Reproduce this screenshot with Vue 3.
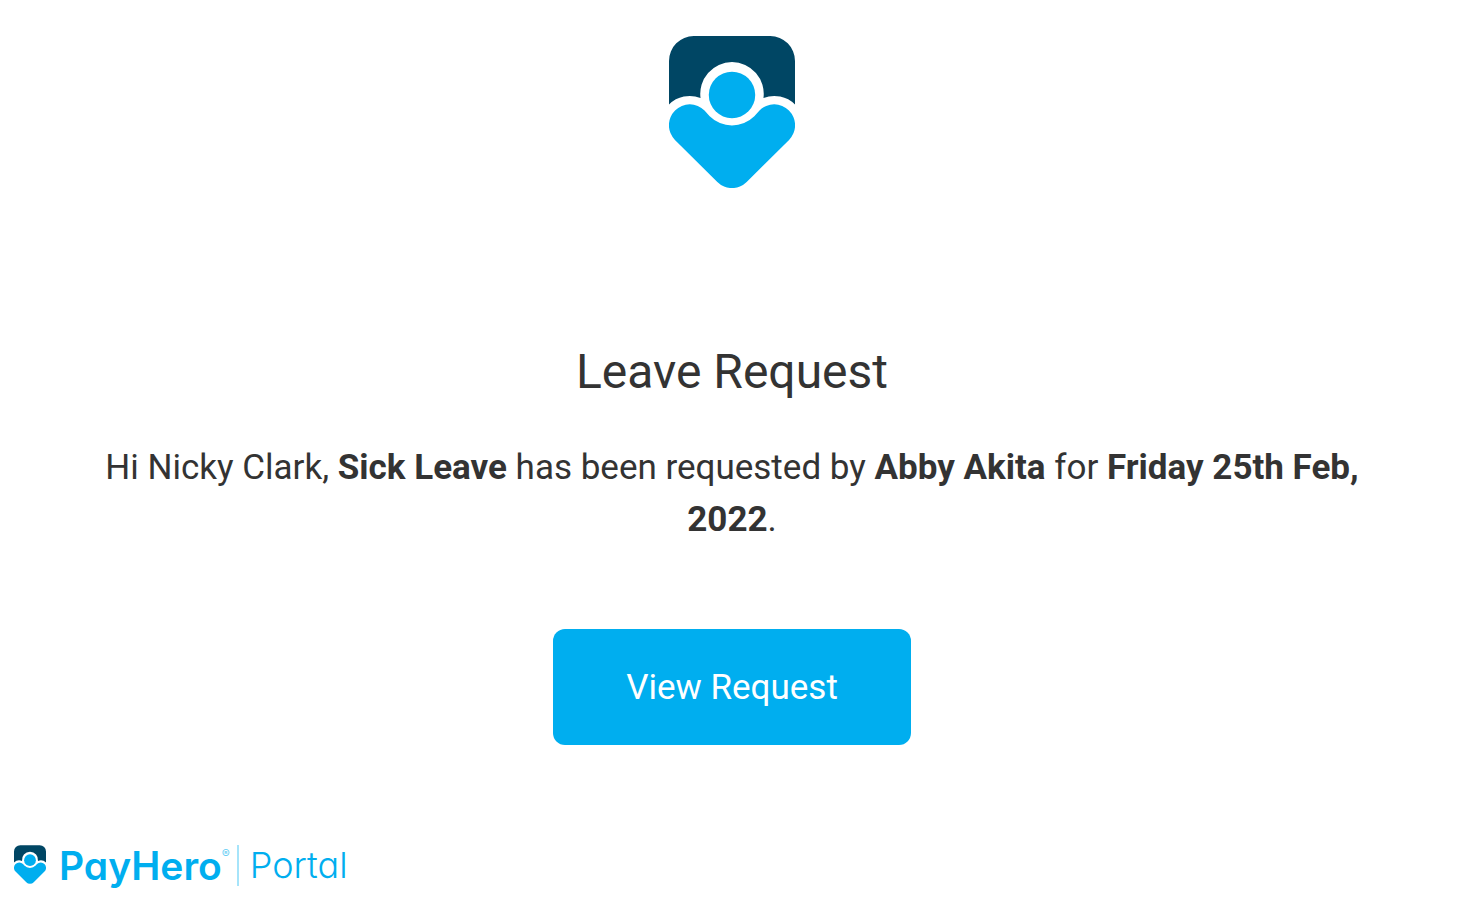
<script setup>
const shoulders = 'M0 69V25A25 25 0 0 1 25 0H102A25 25 0 0 1 127 25V69A29.500 29.500 0 0 0 95.200 62.500A32 32 0 1 0 31.800 62.500A29.500 29.500 0 0 0 0 69Z'
const body = 'M35.800 75L41 80.800A32 32 0 0 0 86 80.800L91.200 75A21 21 0 1 1 121 104.600L78.300 147.100A21 21 0 0 1 48.700 147.100L6 104.600A21 21 0 1 1 35.800 75Z'
</script>

<template>
  <main class="mail">
    <svg class="logo" viewBox="0 0 127 153" role="img" aria-label="PayHero">
      <path class="navy" :d="shoulders" />
      <circle class="sky" cx="63.500" cy="59.300" r="23.400" />
      <path class="sky" :d="body" />
    </svg>
    <h1>Leave Request</h1>
    <p class="message">Hi Nicky Clark, <strong>Sick Leave</strong> has been requested by <strong>Abby Akita</strong> for <strong>Friday 25th Feb, 2022</strong>.</p>
    <a class="action" href="#">View Request</a>
    <footer class="brand">
      <svg class="mark" viewBox="0 0 127 153" aria-hidden="true">
        <path class="navy" :d="shoulders" />
        <circle class="sky" cx="63.500" cy="59.300" r="23.400" />
        <path class="sky" :d="body" />
      </svg>
      <span class="name">PayHero</span>
      <span class="registered">®</span>
      <span class="portal">Portal</span>
    </footer>
  </main>
</template>

<style scoped>
.mail {
  display: flex;
  flex-direction: column;
  align-items: center;
  box-sizing: border-box;
  padding: 36px 3px 16px 0;
  font-family: Roboto, sans-serif;
  color: #333;
}
.logo {
  width: 126px;
  height: 152px;
}
.navy { fill: #004664; }
.sky { fill: #00aeef; }
h1 {
  margin: 152px 0 0;
  font-size: 48px;
  line-height: 64px;
  font-weight: 400;
}
.message {
  box-sizing: border-box;
  width: 100%;
  margin: 38px 0 0;
  padding: 0 96px;
  font-size: 35px;
  line-height: 52px;
  text-align: center;
}
.action {
  margin-top: 83px;
  padding: 33px 73px 31px;
  border-radius: 12px;
  background: #00aeef;
  color: #fff;
  font-size: 35px;
  line-height: 52px;
  text-decoration: none;
}
.brand {
  display: flex;
  align-items: flex-start;
  align-self: flex-start;
  margin: 100px 0 0 14px;
  color: #00aeef;
  font-family: Inter, sans-serif;
  font-feature-settings: "cv11";
  line-height: 41px;
}
.mark {
  width: 32px;
  height: 39px;
}
.name {
  margin-left: 13px;
  font-size: 39px;
  font-weight: 600;
}
.registered {
  color: #66cef5;
  font-size: 12px;
  line-height: 18px;
}
.portal {
  margin-left: 7px;
  padding-left: 11px;
  border-left: 2px solid #a6e4fa;
  font-size: 36px;
  font-weight: 300;
}
</style>

<style>
body { margin: 0; background: #fff; }
</style>
